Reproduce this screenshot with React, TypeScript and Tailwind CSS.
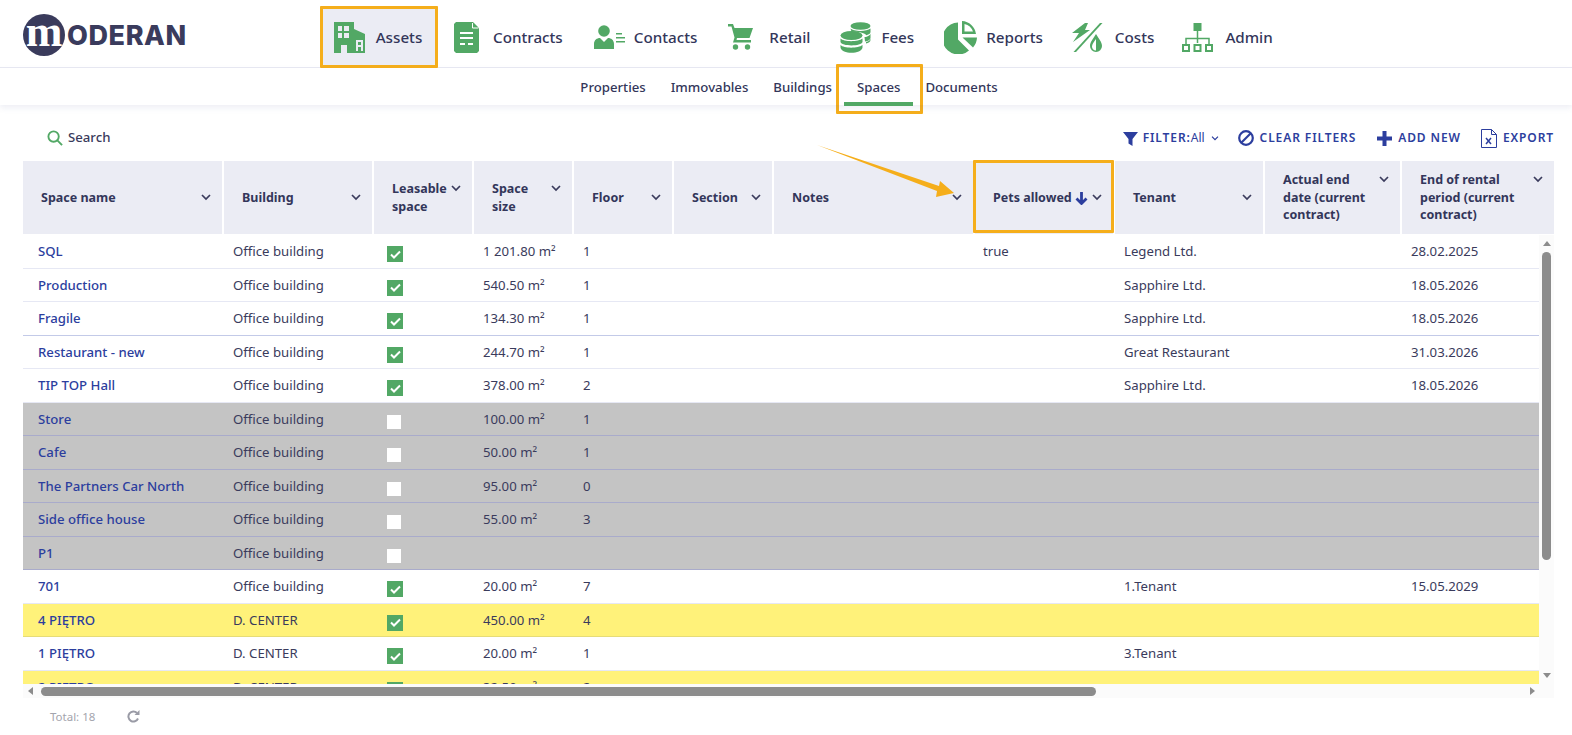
const green = "#52a865";

const BuildingIcon = () => (
  <svg width="31" height="31" viewBox="0 0 31 31" fill={green}>
    <path fillRule="evenodd" d="M0 0h20v7l11 5v19H13v-8H7v8H0zM4 4v5h4V4zm6 0v5h5V4zM4 11v5h4v-5zm6 0v5h5v-5zM22 18v11h2v-4h3v4h2V18zm2 2h3v3h-3z" />
  </svg>
);

const ContractIcon = () => (
  <svg width="25" height="31" viewBox="0 0 25 31">
    <path d="M2 0h17l5 5 1 2v22l-2 2H2l-2-2V2z" fill={green} />
    <path d="M6 11h13M6 16h13" stroke="#fff" strokeWidth="2.200" />
    <path d="M6 22h5M14 22h5" stroke="#fff" strokeWidth="2" />
    <path d="M18.500 1v5h5.500" fill="none" stroke="#fff" strokeWidth="1" />
  </svg>
);

const ContactIcon = () => (
  <svg width="31" height="24" viewBox="0 0 31 24" fill={green} className="ml-[2px]">
    <circle cx="10" cy="6" r="5.800" />
    <path d="M0 24v-5c0-4 3-6 6-6l4 4 4-4c3 0 6 2 6 6v5z" />
    <path d="M22 8h6v1.500h-6zM22 12h9v1.500h-9zM22 16h9v1.500h-9z" />
  </svg>
);

const CartIcon = () => (
  <svg width="25" height="26" viewBox="0 0 25 26" fill={green}>
    <path d="M0 0h5l1.500 4H25l-3.500 10H9l-.5 2H23v2.500H5l1.500-5L3.500 2.500H0z" />
    <circle cx="7.500" cy="23" r="2.700" />
    <circle cx="19.500" cy="23" r="2.700" />
  </svg>
);

const CoinsIcon = () => (
  <svg width="31" height="31" viewBox="0 0 31 31" fill={green}>
    <ellipse cx="20.500" cy="4" rx="10" ry="3.800" />
    <path d="M10.500 6.500c3 3 16 3.500 20 0V10c0 1.500-1.500 2.500-4 3.200-2-2.500-9-4-15-3.400z" />
    <path d="M24.500 15c3 0 6-2 6-3.500V16c0 1.500-2 3-5.500 3.500z" />
    <path d="M26 20c2.500-.5 4.500-2 4.500-3.500V18c0 2-2 3-4.500 3.500z" />
    <ellipse cx="11.500" cy="13.500" rx="11" ry="4.500" />
    <path d="M.5 16.500c3 3.500 18 3.500 22 0v3.500c-1 4.500-21 4.500-22 0z" />
    <path d="M.5 23c3 3.500 18 3.500 22 0v2.500c-1 7-21 7-22 0z" />
  </svg>
);

const PieIcon = () => (
  <svg width="33" height="33" viewBox="0 0 33 33" fill={green}>
    <path d="M14 1.500v17l11 11A16 16 0 1 1 14 1.500z" />
    <path fillRule="evenodd" d="M18 0a15 15 0 0 1 14 13H18zm2.500 3v7.500H29A12 12 0 0 0 20.500 3z" />
    <path d="M18.500 16.500H33a16 16 0 0 1-4 10z" />
  </svg>
);

const CostIcon = () => (
  <svg width="32" height="31" viewBox="0 0 32 31" fill={green}>
    <path d="M13 1h3l-3 7h5L1 20l6-9H0z" />
    <path d="M28 1h2.500L4 30H1.500z" />
    <path fillRule="evenodd" d="M24 12c3 5 6 8 6 12a6 6 0 0 1-12 0c0-4 3-7 6-12zm0 5c-2 3-4 5-4 7.500 0 2 1.500 4 4 4z" />
  </svg>
);

const SitemapIcon = () => (
  <svg width="31" height="29" viewBox="0 0 31 29" fill="none" stroke={green} strokeWidth="1.500">
    <rect x="11.500" y="0" width="8" height="8" fill={green} stroke="none" />
    <path d="M15.500 8v12M4 21v-5.500h23V21" />
    <rect x="1" y="22" width="6" height="6" strokeWidth="2" />
    <rect x="12.500" y="22" width="6" height="6" strokeWidth="2" />
    <rect x="24" y="22" width="6" height="6" strokeWidth="2" />
  </svg>
);

const Chevron = ({ className = "" }: { className?: string }) => (
  <svg width="10" height="7" viewBox="0 0 10 7" fill="none" stroke="#3a3b5c" strokeWidth="1.700" className={className}>
    <path d="M1 1l4 4 4-4" />
  </svg>
);

const navItems = [
  { label: "Assets", icon: <BuildingIcon />, cls: "ml-[14px] w-[118px] justify-center bg-[#ebecf4] gap-[11px] pr-[2px]" },
  { label: "Contracts", icon: <ContractIcon />, cls: "ml-[16px] gap-[14px]" },
  { label: "Contacts", icon: <ContactIcon />, cls: "ml-[29px] gap-[9px]" },
  { label: "Retail", icon: <CartIcon />, cls: "ml-[31px] gap-[16px]" },
  { label: "Fees", icon: <CoinsIcon />, cls: "ml-[30px] gap-[10px]" },
  { label: "Reports", icon: <PieIcon />, cls: "ml-[30px] gap-[9px]" },
  { label: "Costs", icon: <CostIcon />, cls: "ml-[29px] gap-[11px]" },
  { label: "Admin", icon: <SitemapIcon />, cls: "ml-[28px] gap-[12px]" },
];

const subItems = ["Properties", "Immovables", "Buildings", "Spaces", "Documents"];

const columnsClass = "grid grid-cols-[199px_148px_98px_98px_98px_98px_199px_138px_148px_135px_152px] gap-x-[2px] w-[1531px]";

const headers = [
  "Space name",
  "Building",
  "Leasable space",
  "Space size",
  "Floor",
  "Section",
  "Notes",
  "Pets allowed",
  "Tenant",
  "Actual end date (current contract)",
  "End of rental period (current contract)",
];

type Row = {
  name: string;
  building: string;
  leasable: boolean;
  size: string;
  floor: string;
  pets?: string;
  tenant?: string;
  end?: string;
  tone: "white" | "blue" | "gray" | "yellow";
};

const rows: Row[] = [
  { name: "SQL", building: "Office building", leasable: true, size: "1 201.80", floor: "1", pets: "true", tenant: "Legend Ltd.", end: "28.02.2025", tone: "white" },
  { name: "Production", building: "Office building", leasable: true, size: "540.50", floor: "1", tenant: "Sapphire Ltd.", end: "18.05.2026", tone: "white" },
  { name: "Fragile", building: "Office building", leasable: true, size: "134.30", floor: "1", tenant: "Sapphire Ltd.", end: "18.05.2026", tone: "blue" },
  { name: "Restaurant - new", building: "Office building", leasable: true, size: "244.70", floor: "1", tenant: "Great Restaurant", end: "31.03.2026", tone: "white" },
  { name: "TIP TOP Hall", building: "Office building", leasable: true, size: "378.00", floor: "2", tenant: "Sapphire Ltd.", end: "18.05.2026", tone: "white" },
  { name: "Store", building: "Office building", leasable: false, size: "100.00", floor: "1", tone: "gray" },
  { name: "Cafe", building: "Office building", leasable: false, size: "50.00", floor: "1", tone: "gray" },
  { name: "The Partners Car North", building: "Office building", leasable: false, size: "95.00", floor: "0", tone: "gray" },
  { name: "Side office house", building: "Office building", leasable: false, size: "55.00", floor: "3", tone: "gray" },
  { name: "P1", building: "Office building", leasable: false, size: "", floor: "", tone: "gray" },
  { name: "701", building: "Office building", leasable: true, size: "20.00", floor: "7", tenant: "1.Tenant", end: "15.05.2029", tone: "white" },
  { name: "4 PIĘTRO", building: "D. CENTER", leasable: true, size: "450.00", floor: "4", tone: "yellow" },
  { name: "1 PIĘTRO", building: "D. CENTER", leasable: true, size: "20.00", floor: "1", tenant: "3.Tenant", tone: "white" },
  { name: "2 PIĘTRO", building: "D. CENTER", leasable: true, size: "32.50", floor: "2", tone: "yellow" },
];

const toneClass = {
  white: "bg-white border-[#e6e8f4]",
  blue: "bg-white border-[#c3cae8]",
  gray: "bg-[#c4c4c4] border-[#a9abcb]",
  yellow: "bg-[#fff27a] border-[#e6dc78]",
};

const Checkbox = ({ on }: { on: boolean }) =>
  on ? (
    <span className="flex h-4 w-4 items-center justify-center bg-[#52a865]">
      <svg width="11" height="9" viewBox="0 0 11 9" fill="none" stroke="#fff" strokeWidth="2">
        <path d="M1 4.500l3 3 6-6" />
      </svg>
    </span>
  ) : (
    <span className="block h-[14px] w-[14px] bg-white" />
  );

const Cell = ({ children, className = "pl-[9px] pt-[2px]" }: { children?: React.ReactNode; className?: string }) => (
  <div className={`flex items-center whitespace-nowrap ${className}`}>{children}</div>
);

export default function App() {
  return (
    <div className="relative h-screen overflow-hidden bg-white font-['Noto_Sans',sans-serif] text-[#3a3b5c]">
      {/* top nav */}
      <header className="flex h-[68px] border-b border-[#e8e9f2]">
        <div className="ml-[23px] mt-[3px] flex w-[283px] items-center self-center">
          <span className="flex h-[42px] w-[42px] items-center justify-center rounded-full bg-[#3a3b5c] pb-[7px] font-['Liberation_Serif',serif] text-[44px] font-bold leading-none text-white">
            m
          </span>
          <span className="ml-[2px] font-['Inter',sans-serif] text-[27px] font-extrabold leading-none tracking-[0.6px] text-[#3a3b5c]">
            ODERAN
          </span>
        </div>
        <nav className="flex items-stretch">
          {navItems.map((item) => (
            <a
              key={item.label}
              className={`mt-[6px] flex h-[61px] items-center self-start pt-[1px] text-[15.200px] font-medium text-[#33365a] ${item.cls}`}
            >
              {item.icon}
              <span>{item.label}</span>
            </a>
          ))}
        </nav>
      </header>

      {/* sub nav */}
      <div className="relative z-10 flex h-[37px] items-center justify-center pl-[6px] shadow-[0_3px_6px_rgba(90,95,160,0.1)]">
        {subItems.map((label) => (
          <a key={label} className="relative flex h-full items-center px-[12.500px] pt-[2px] text-[13.200px] font-medium text-[#33365a]">
            {label}
            {label === "Spaces" && <span className="absolute inset-x-0 bottom-[-1px] h-1 bg-[#52a865]" />}
          </a>
        ))}
      </div>

      {/* toolbar */}
      <div className="ml-[47px] mr-[18px] flex h-[56px] items-center justify-between pt-[10px]">
        <div className="flex items-center gap-[5px] text-[13.200px] font-medium text-[#3a3b5c]">
          <svg width="16" height="16" viewBox="0 0 17 17" fill="none" stroke={green} strokeWidth="2">
            <circle cx="7" cy="7" r="5.500" />
            <path d="M11 11l5 5" />
          </svg>
          Search
        </div>
        <div className="flex items-center text-[12px] font-semibold tracking-[0.9px] text-[#2c3e9e]">
          <svg width="15" height="15" viewBox="0 0 15 15" fill="#2c3e9e">
            <path d="M0 1h15L9.500 8v7l-4-2.500V8z" />
          </svg>
          <span className="ml-[5px]">FILTER:</span>
          <span className="font-normal tracking-normal">All</span>
          <Chevron className="ml-[5px] scale-75 [&_path]:stroke-[#2c3e9e]" />
          <svg width="16" height="16" viewBox="0 0 16 16" fill="none" stroke="#2c3e9e" strokeWidth="2.200" className="ml-[18px]">
            <circle cx="8" cy="8" r="6.800" />
            <path d="M3.500 12.500l9-9" />
          </svg>
          <span className="ml-[6px]">CLEAR FILTERS</span>
          <svg width="15" height="15" viewBox="0 0 15 15" fill="#2c3e9e" className="ml-[21px]">
            <path d="M5.500 0h4v5.500H15v4H9.500V15h-4V9.500H0v-4h5.500z" />
          </svg>
          <span className="ml-[6px]">ADD NEW</span>
          <svg width="16" height="19" viewBox="0 0 16 19" fill="none" stroke="#2c3e9e" className="ml-[20px]">
            <path d="M.500.500h10l5 5v13H.500zM10.500.500v5h5" />
            <path d="M5 9l5 6M10 9l-5 6" strokeWidth="1.500" />
          </svg>
          <span className="ml-[6px]">EXPORT</span>
        </div>
      </div>

      {/* table */}
      <div className="ml-[23px] mr-[18px]">
        <div className={`${columnsClass} h-[73px]`}>
          {headers.map((title) => (
            <div key={title} className="flex items-center bg-[#ebecf4] pl-[18px] pr-[11px] text-[12.500px] font-bold leading-[17.500px] text-[#33365a]">
              <div className="flex w-full items-start justify-between">
                <span className="flex max-w-[105px] items-center">
                  {title}
                  {title === "Pets allowed" && (
                    <svg width="13" height="13" viewBox="0 0 13 13" fill="none" stroke="#2c3e9e" strokeWidth="2.800" className="ml-[3px] mt-[2px] shrink-0">
                      <path d="M6.500 0v11M1.500 6.500l5 5 5-5" />
                    </svg>
                  )}
                </span>
                <Chevron className="mt-[5px] shrink-0" />
              </div>
            </div>
          ))}
        </div>

        <div className="mt-[1px] flex h-[449px]">
          <div className="w-[1516px] overflow-hidden">
            {rows.map((row) => (
              <div key={row.name} className={`${columnsClass} h-[33.500px] border-b text-[13.200px] ${toneClass[row.tone]}`}>
                <Cell className="pl-[15px] pt-[2px] font-medium text-[#2c3e9e]">{row.name}</Cell>
                <Cell>{row.building}</Cell>
                <Cell className="pl-[13px] pt-[6px]">
                  <Checkbox on={row.leasable} />
                </Cell>
                <Cell>{row.size && `${row.size} m²`}</Cell>
                <Cell>{row.floor}</Cell>
                <Cell />
                <Cell />
                <Cell className="pl-[8px] pt-[2px]">{row.pets}</Cell>
                <Cell>{row.tenant}</Cell>
                <Cell />
                <Cell>{row.end}</Cell>
              </div>
            ))}
          </div>
          {/* vertical scrollbar */}
          <div className="flex w-[15px] flex-col items-center bg-[#fbfbfb] pt-[6px]">
            <span className="h-0 w-0 border-x-[4.500px] border-b-[5px] border-x-transparent border-b-[#8c8c8c]" />
            <span className="mt-[6px] h-[308px] w-[9px] rounded-full bg-[#8c8c8c]" />
            <span className="mb-[6px] mt-auto h-0 w-0 border-x-[4.500px] border-t-[5px] border-x-transparent border-t-[#8c8c8c]" />
          </div>
        </div>

        {/* horizontal scrollbar */}
        <div className="flex h-[14px] items-center bg-[#fbfbfb] pl-[5px]">
          <span className="h-0 w-0 border-y-[4.500px] border-r-[5px] border-y-transparent border-r-[#8c8c8c]" />
          <span className="ml-[8px] h-[9px] w-[1055px] rounded-full bg-[#8c8c8c]" />
          <span className="ml-auto mr-[19px] h-0 w-0 border-y-[4.500px] border-l-[5px] border-y-transparent border-l-[#8c8c8c]" />
        </div>
      </div>

      {/* footer */}
      <div className="ml-[50px] mt-[10px] flex items-center text-[11.500px] text-[#a3a4ad]">
        <span className="w-[77px]">Total: 18</span>
        <svg width="13" height="13" viewBox="0 0 13 13" fill="none" stroke="#9a9ba6" strokeWidth="2">
          <path d="M11 8.500A5 5 0 1 1 10 3" />
          <path d="M12.500 0v5h-5z" fill="#9a9ba6" stroke="none" />
        </svg>
      </div>

      {/* annotations */}
      <div className="absolute left-[320px] top-[6px] h-[62px] w-[118px] rounded-[1px] border-[3px] border-[#f5ae1b]" />
      <div className="absolute left-[836px] top-[64px] h-[50px] w-[87px] rounded-[1px] border-[3px] border-[#f5ae1b]" />
      <div className="absolute left-[973px] top-[160px] h-[73px] w-[141px] rounded-[1px] border-[3px] border-[#f5ae1b]" />
      <svg className="pointer-events-none absolute left-[810px] top-[140px]" width="150" height="62" viewBox="0 0 150 62" fill="#f5ae1b">
        <path d="M7 5L129 46l1-5 14 12-18 4 1-6z" />
      </svg>
    </div>
  );
}
